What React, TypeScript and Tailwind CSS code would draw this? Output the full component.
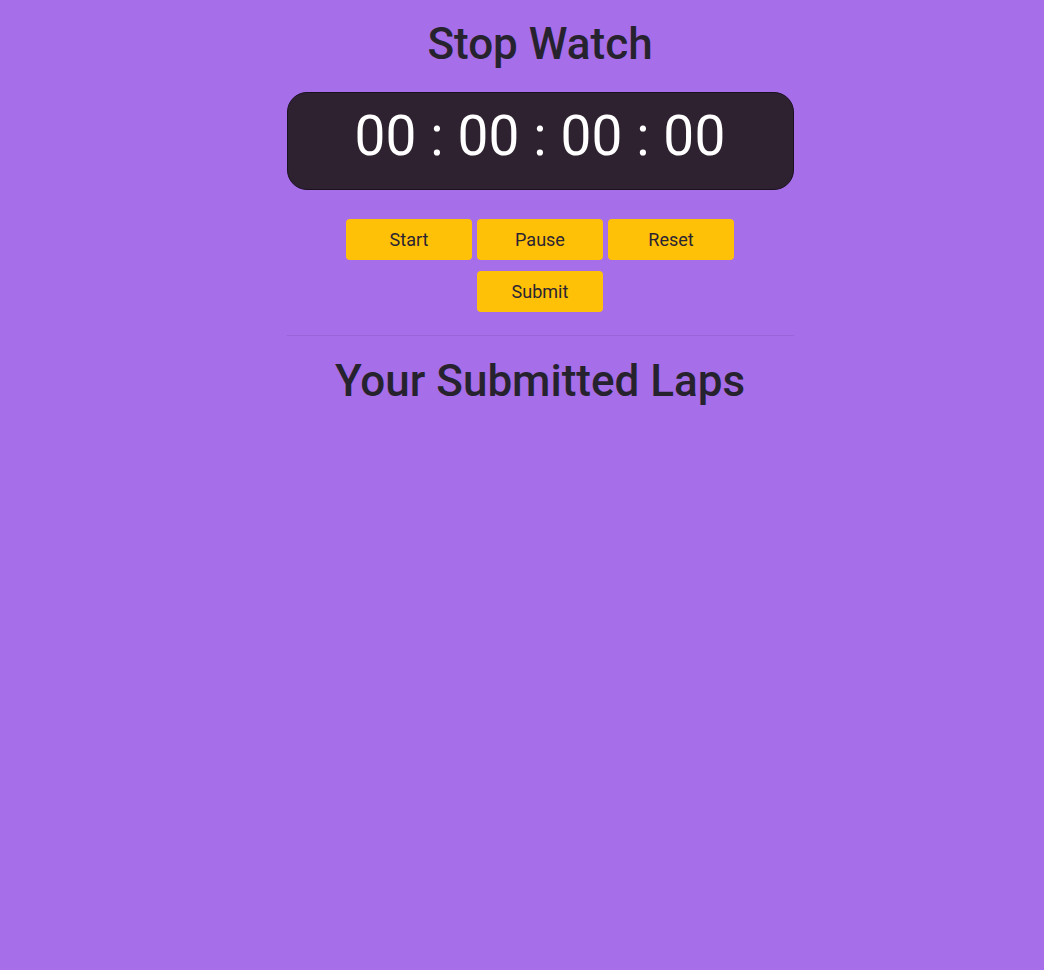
import React from "react";

export default function App() {
  const btn =
    "w-[126px] h-[41px] rounded-[4px] bg-[#ffc107] text-[#2b2433] text-[18px] flex items-center justify-center";
  return (
    <div
      className="min-h-[970px] w-full bg-[#a66ee9] pl-[36px]"
      style={{ fontFamily: "Roboto, 'Noto Sans', sans-serif" }}
    >
      <div className="mx-auto w-[507px] flex flex-col items-center">
        <h1 className="text-[44px] leading-none font-medium text-[#26232f] mt-[22px]">
          Stop Watch
        </h1>
        <div className="mt-[26px] w-[507px] h-[98px] rounded-[20px] bg-[#2f2230] border border-[#1a1020] flex items-center justify-center">
          <span className="text-[55px] leading-none font-normal text-white tracking-[0.1px] pb-[10px]">
            00 : 00 : 00 : 00
          </span>
        </div>
        <div className="mt-[29px] flex gap-[5px]">
          <button className={btn}>Start</button>
          <button className={btn}>Pause</button>
          <button className={btn}>Reset</button>
        </div>
        <div className="mt-[11px] flex">
          <button className={btn}>Submit</button>
        </div>
        <div className="mt-[23px] w-full h-px bg-[#9a63d8]" />
        <h2 className="mt-[23px] text-[44px] leading-none font-medium text-[#26232f]">
          Your Submitted Laps
        </h2>
      </div>
    </div>
  );
}
